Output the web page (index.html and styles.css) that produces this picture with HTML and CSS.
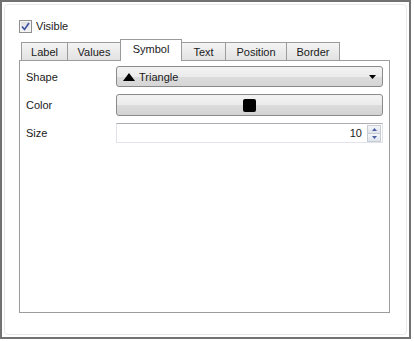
FILE: index.html
```html
<!DOCTYPE html>
<html>
<head>
<meta charset="utf-8">
<link rel="stylesheet" href="styles.css">
</head>
<body>
<div class="frame">
  <div class="inner">
    <label class="check-row">
      <span class="checkbox">
        <svg width="9" height="9" viewBox="0 0 9 9"><path d="M1 4.5 L3.5 7.5 L8 1" fill="none" stroke="#3b50a0" stroke-width="1.6"/></svg>
      </span>
      <span class="check-label">Visible</span>
    </label>
    <div class="tabwidget">
      <div class="tabs">
        <div class="tab t-label">Label</div>
        <div class="tab t-values">Values</div>
        <div class="tab t-symbol active">Symbol</div>
        <div class="tab t-text">Text</div>
        <div class="tab t-position">Position</div>
        <div class="tab t-border">Border</div>
      </div>
      <div class="pane">
        <div class="form">
          <div class="lbl">Shape</div>
          <div class="combo">
            <svg class="tri" width="12" height="8" viewBox="0 0 12 8"><path d="M0 8 L6 0 L12 8 Z" fill="#000"/></svg>
            <span class="combo-text">Triangle</span>
            <svg class="arrow" width="7" height="4" viewBox="0 0 7 4"><path d="M0 0 L7 0 L3.5 4 Z" fill="#000"/></svg>
          </div>
          <div class="lbl">Color</div>
          <div class="colorbtn"><span class="swatch"></span></div>
          <div class="lbl">Size</div>
          <div class="spin">
            <span class="spin-val">10</span>
            <span class="spin-btns">
              <span class="sb up"><svg width="5" height="3" viewBox="0 0 5 3"><path d="M0 3 L2.5 0 L5 3 Z" fill="#4a5fa8"/></svg></span>
              <span class="sb down"><svg width="5" height="3" viewBox="0 0 5 3"><path d="M0 0 L5 0 L2.5 3 Z" fill="#4a5fa8"/></svg></span>
            </span>
          </div>
        </div>
      </div>
    </div>
  </div>
</div>
</body>
</html>
```
FILE: styles.css
```css
html, body {
  margin: 0;
  padding: 0;
  background: #ffffff;
}
body {
  font-family: "Liberation Sans", Arial, sans-serif;
  font-size: 11px;
  color: #1a1a1a;
}
.frame {
  width: 411px;
  height: 339px;
  box-sizing: border-box;
  border: 2px solid #727272;
  padding: 2px;
  background: #ffffff;
}
.inner {
  height: 100%;
  box-sizing: border-box;
  border: 1px solid #e6e8ea;
  border-radius: 4px;
  padding: 15px 15px 0 14px;
}
.check-row {
  display: flex;
  align-items: center;
  height: 13px;
  gap: 4px;
}
.checkbox {
  width: 11px;
  height: 11px;
  border: 1px solid #8e8f8f;
  background: linear-gradient(#dcdcdc, #f6f6f6);
  display: flex;
  align-items: center;
  justify-content: center;
  box-shadow: inset 0 0 0 1px #f4f4f4;
}
.check-label {
  line-height: 13px;
}
.tabwidget {
  margin-top: 6px;
  width: 371px;
}
.tabs {
  display: flex;
  align-items: flex-end;
  height: 21px;
  padding-left: 2px;
  position: relative;
  z-index: 1;
}
.tab {
  box-sizing: border-box;
  height: 18px;
  border: 1px solid #9b9b9b;
  border-bottom: none;
  margin-left: -1px;
  background: linear-gradient(#f4f4f4, #e2e2e2);
  display: flex;
  align-items: center;
  justify-content: center;
  padding-top: 1px;
}
.tab:first-child {
  margin-left: 0;
}
.tab.active {
  height: 22px;
  margin-bottom: -1px;
  background: #ffffff;
  border-color: #9b9b9b;
  position: relative;
  z-index: 2;
  padding-top: 0;
  padding-bottom: 3px;
}
.t-label { width: 47px; }
.t-values { width: 54px; }
.t-symbol { width: 62px; }
.t-text { width: 45px; }
.t-position { width: 62px; }
.t-border { width: 54px; }
.pane {
  box-sizing: border-box;
  height: 253px;
  border: 1px solid #9c9c9c;
  background: #ffffff;
  padding: 5px 6px 0 5px;
}
.form {
  display: grid;
  grid-template-columns: 91px 1fr;
  row-gap: 7px;
  align-items: center;
}
.lbl {
  padding-left: 1px;
}
.combo {
  box-sizing: border-box;
  height: 21px;
  border: 1px solid #8a8a8a;
  border-radius: 3px;
  background: linear-gradient(#f3f3f3 0%, #ebebeb 50%, #dcdcdc 51%, #d6d6d6 100%);
  display: flex;
  align-items: center;
  padding: 0 6px 0 6px;
}
.tri {
  margin-right: 4px;
}
.combo-text {
  flex: 1;
}
.colorbtn {
  box-sizing: border-box;
  height: 22px;
  border: 1px solid #8a8a8a;
  border-radius: 3px;
  background: linear-gradient(#f3f3f3 0%, #ebebeb 50%, #dcdcdc 51%, #d2d2d2 100%);
  display: flex;
  align-items: center;
  justify-content: center;
}
.swatch {
  width: 13px;
  height: 13px;
  background: #000000;
  border-radius: 2px;
}
.spin {
  box-sizing: border-box;
  height: 20px;
  border: 1px solid #e2e3ea;
  border-top-color: #abadb3;
  display: flex;
  align-items: center;
  justify-content: flex-end;
  padding-right: 1px;
  background: #ffffff;
}
.spin-val {
  margin-right: 5px;
}
.spin-btns {
  display: flex;
  flex-direction: column;
  width: 14px;
  height: 17px;
}
.sb {
  flex: 1;
  display: flex;
  align-items: center;
  justify-content: center;
  border: 1px solid #c8ccd4;
  background: linear-gradient(#f4f6f9, #dfe4ec);
}
.sb.down {
  border-top: none;
}
```
